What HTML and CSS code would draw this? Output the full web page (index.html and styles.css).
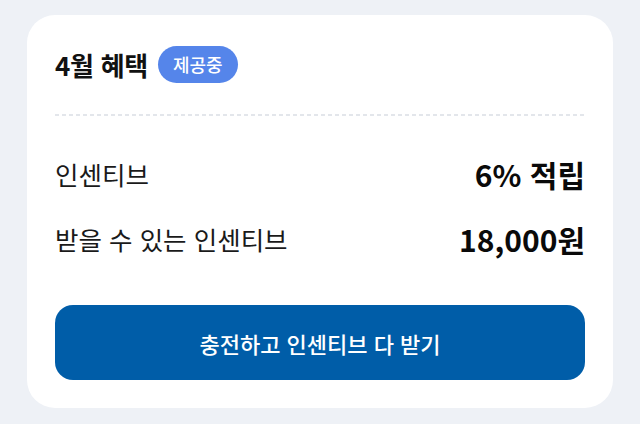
FILE: index.html
```html
<!DOCTYPE html>
<html lang="ko">
<head>
    <meta charset="UTF-8">
    <meta name="viewport" content="width=device-width, initial-scale=1.0">
    <title>4월 혜택</title>
    <link rel="stylesheet" href="styles.css">
</head>
<body>
    <div class="card">
        <div class="card-head">
            <h2 class="title">4월 혜택</h2>
            <span class="badge">제공중</span>
        </div>
        <div class="divider"></div>
        <div class="rows">
            <div class="row">
                <span class="label">인센티브</span>
                <span class="value">6% 적립</span>
            </div>
            <div class="row">
                <span class="label">받을 수 있는 인센티브</span>
                <span class="value">18,000원</span>
            </div>
        </div>
        <button class="cta">충전하고 인센티브 다 받기</button>
    </div>
</body>
</html>
```

FILE: styles.css
```css
/* Global */
* {
    box-sizing: border-box;
    margin: 0;
    padding: 0;
}
body {
    font-family: "Noto Sans CJK KR", "Noto Sans", sans-serif;
    background: #eef1f6;
    padding: 15px 27px 16px;
    color: #111;
}

/* Card */
.card {
    background: #fff;
    border-radius: 28px;
    padding: 31px 28px 28px;
}
.card-head {
    display: flex;
    align-items: center;
    gap: 10px;
    height: 37px;
}
.title {
    font-size: 26px;
    font-weight: 700;
    letter-spacing: -0.3px;
}
.badge {
    background: #5585ea;
    color: #fff;
    font-size: 18px;
    font-weight: 500;
    height: 37px;
    line-height: 37px;
    padding: 0 15px;
    border-radius: 19px;
}
.divider {
    margin: 31px 0 0;
    height: 2px;
    background: repeating-linear-gradient(to right, #e3e6eb 0 4px, transparent 4px 7px);
}

/* Rows */
.rows {
    display: flex;
    flex-direction: column;
    gap: 30px;
    padding: 40px 0 49px;
}
.row {
    display: flex;
    justify-content: space-between;
    align-items: center;
    height: 35px;
}
.label {
    font-size: 25.5px;
    font-weight: 400;
    color: #1a1a1a;
}
.value {
    font-size: 30px;
    font-weight: 700;
    letter-spacing: 0;
    color: #0a0a0a;
}

/* Button */
.cta {
    width: 100%;
    height: 75px;
    border: none;
    border-radius: 18px;
    background: #005da8;
    color: #fff;
    font-family: inherit;
    font-size: 22px;
    font-weight: 500;
    cursor: pointer;
}
```
